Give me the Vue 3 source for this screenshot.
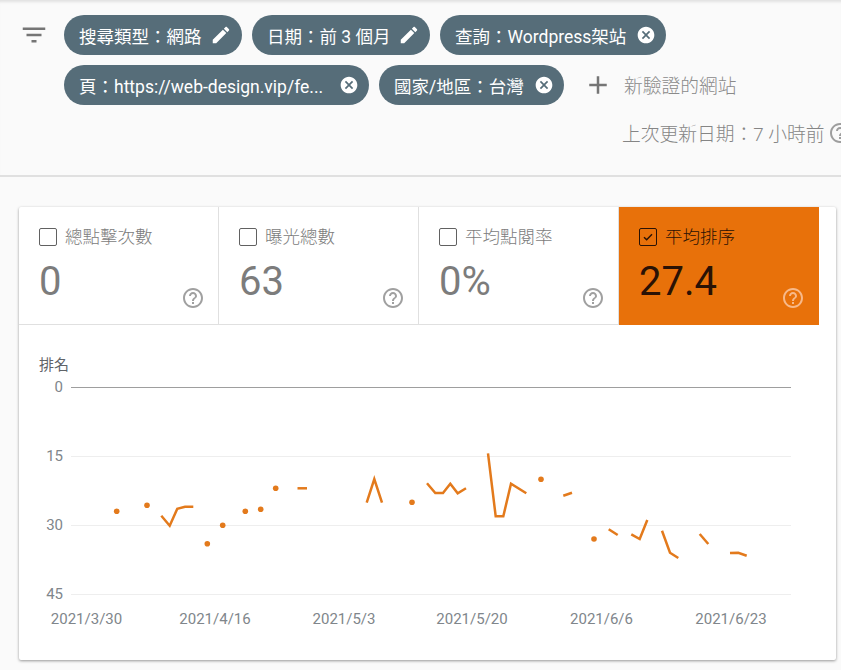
<script setup>
const help = 'M11 18h2v-2h-2v2zm1-16C6.48 2 2 6.48 2 12s4.48 10 10 10 10-4.48 10-10S17.52 2 12 2zm0 18c-4.41 0-8-3.59-8-8s3.59-8 8-8 8 3.59 8 8-3.59 8-8 8zm0-14c-2.21 0-4 1.79-4 4h2c0-1.1.9-2 2-2s2 .9 2 2c0 2-3 1.75-3 5h2c0-2.25 3-2.5 3-5 0-2.21-1.79-4-4-4z'
const edit = 'M3 17.25V21h3.75L17.81 9.94l-3.75-3.75L3 17.25zM20.71 7.04c.39-.39.39-1.02 0-1.41l-2.34-2.34c-.39-.39-1.02-.39-1.41 0l-1.83 1.83 3.75 3.75 1.83-1.83z'
const cancel = 'M12 2C6.47 2 2 6.47 2 12s4.47 10 10 10 10-4.47 10-10S17.53 2 12 2zm5 13.59L15.59 17 12 13.41 8.41 17 7 15.59 10.59 12 7 8.41 8.41 7 12 10.59 15.59 7 17 8.41 13.41 12 17 15.59z'

const chips = [
  { text: '搜尋類型：網路', icon: 'edit', w: 178 },
  { text: '日期：前 3 個月', icon: 'edit', w: 178 },
  { text: '查詢：Wordpress架站', icon: 'x', w: 226 },
  { text: '頁：https://web-design.vip/fe...', icon: 'x', w: 305 },
  { text: '國家/地區：台灣', icon: 'x', w: 185 },
]

const tiles = [
  { label: '總點擊次數', value: '0' },
  { label: '曝光總數', value: '63' },
  { label: '平均點閱率', value: '0%' },
  { label: '平均排序', value: '27.4', active: true },
]

const yTicks = [
  { label: '0', y: 387, dark: true },
  { label: '15', y: 456 },
  { label: '30', y: 525 },
  { label: '45', y: 594 },
]
const xTicks = [
  { label: '2021/3/30', x: 86.5 },
  { label: '2021/4/16', x: 215 },
  { label: '2021/5/3', x: 344 },
  { label: '2021/5/20', x: 472 },
  { label: '2021/6/6', x: 601.5 },
  { label: '2021/6/23', x: 731 },
]
const dots = [
  [116.7, 511.3], [147, 505.3], [207.3, 543.7], [222.7, 525.3], [245.3, 511.3],
  [260.7, 509.3], [275.7, 488.3], [412, 502.3], [541, 479.3], [594, 539],
]
const lines = [
  '161.3,515.7 169.7,525.7 177.3,508.7 185,506.7 193.3,506.7',
  '297.5,488.3 307,488.3',
  '366.7,502.7 374.3,479 382,502.7',
  '427,483.3 435.3,493 443,493 450.3,483.7 457.7,493.3 466,488.3',
  '488,453.3 495.7,516.3 503.3,516.3 511,483.7 526.3,493.3',
  '563.3,495.7 572,492.7',
  '608.7,529.3 617.7,535',
  '631.3,534.3 639.7,539 647.3,520',
  '662,530.7 670,552.7 678.3,558',
  '699.7,534 708.3,544',
  '730,553 738.3,552.7 746.7,555.7',
]
</script>

<template>
  <div class="page">
    <header class="header">
      <div class="filter-row">
        <svg class="filter-icon" viewBox="0 0 24 24"><path d="M10 18h4v-2h-4v2zM3 6v2h18V6H3zm3 7h12v-2H6v2z" /></svg>
        <div class="chips">
          <div v-for="c in chips" :key="c.text" class="chip" :style="{ width: c.w + 'px' }">
            <span class="chip-text">{{ c.text }}</span>
            <svg v-if="c.icon === 'edit'" class="chip-edit" viewBox="0 0 24 24"><path :d="edit" /></svg>
            <svg v-else class="chip-x" viewBox="0 0 24 24"><path :d="cancel" /></svg>
          </div>
          <div class="add">
            <svg class="plus" viewBox="0 0 24 24"><path d="M19 13h-6v6h-2v-6H5v-2h6V5h2v6h6v2z" /></svg>
            <span>新驗證的網站</span>
          </div>
        </div>
      </div>
      <div class="updated">
        <span>上次更新日期：7 小時前</span>
        <svg class="updated-help" viewBox="0 0 24 24"><path :d="help" /></svg>
      </div>
    </header>

    <main class="card">
      <div class="tiles">
        <div v-for="t in tiles" :key="t.label" class="tile" :class="{ active: t.active }">
          <div class="tile-label">
            <span class="box">
              <svg v-if="t.active" viewBox="0 0 18 18"><path d="M4.5 9.2l3 3 6-6.2" /></svg>
            </span>
            <span class="label-text">{{ t.label }}</span>
          </div>
          <div class="tile-value">{{ t.value }}</div>
          <svg class="tile-help" viewBox="0 0 24 24"><path :d="help" /></svg>
        </div>
      </div>
      <svg class="chart" viewBox="19 325 817 335">
        <text x="39" y="370" class="axis-title">排名</text>
        <g v-for="t in yTicks" :key="t.label">
          <line x1="71" x2="791" :y1="t.y + 0.5" :y2="t.y + 0.5" :class="t.dark ? 'grid-dark' : 'grid'" />
          <text x="63" :y="t.y + 5" text-anchor="end" class="tick">{{ t.label }}</text>
        </g>
        <text v-for="t in xTicks" :key="t.label" :x="t.x" y="624" text-anchor="middle" class="tick">{{ t.label }}</text>
        <polyline v-for="l in lines" :key="l" :points="l" class="series" />
        <circle v-for="d in dots" :key="d[0]" :cx="d[0]" :cy="d[1]" r="2.8" class="dot" />
      </svg>
    </main>
  </div>
</template>

<style scoped>
.page {
  width: 841px;
  height: 670px;
  overflow: hidden;
  background: #fafafa;
  font-family: Roboto, "Noto Sans CJK KR", "Noto Sans CJK TC", sans-serif;
  color: #757575;
}
.header {
  height: 177px;
  box-sizing: border-box;
  padding-top: 15px;
  border-bottom: 2px solid #e0e0e0;
  box-shadow: inset 0 4px 3px -2px rgba(0, 0, 0, 0.1);
}
.filter-row {
  display: flex;
  align-items: flex-start;
  padding-left: 19px;
}
.filter-icon {
  width: 30px;
  height: 30px;
  margin-top: 5px;
  fill: #757575;
  flex: none;
}
.chips {
  display: flex;
  flex-wrap: wrap;
  gap: 10px;
  margin-left: 15px;
  width: 740px;
}
.chip {
  height: 40px;
  box-sizing: border-box;
  border-radius: 20px;
  background: #566d79;
  color: #fff;
  font-size: 17.5px;
  display: flex;
  align-items: center;
  justify-content: space-between;
  padding: 0 10px 0 15px;
  white-space: nowrap;
}
.chip-edit {
  width: 22px;
  height: 22px;
  fill: #fff;
  flex: none;
}
.chip-x {
  width: 20px;
  height: 20px;
  fill: #fff;
  flex: none;
}
.add {
  display: flex;
  align-items: center;
  height: 40px;
  font-size: 18.75px;
  font-weight: 300;
  color: #8a8a8a;
  margin-left: 9px;
}
.add span {
  padding-bottom: 2px;
}
.plus {
  width: 30px;
  height: 30px;
  fill: #757575;
  margin-right: 11px;
}
.updated {
  display: flex;
  align-items: center;
  margin-top: 14px;
  padding-left: 622px;
  font-size: 18.75px;
  font-weight: 300;
  color: #858585;
  white-space: nowrap;
}
.updated-help {
  width: 24px;
  height: 24px;
  fill: #9e9e9e;
  margin-left: 4px;
  flex: none;
}
.card {
  width: 817px;
  height: 453px;
  margin: 30px 0 0 19px;
  background: #fff;
  border-radius: 2px;
  box-shadow: 0 1px 3px rgba(0, 0, 0, 0.4);
  overflow: hidden;
}
.tiles {
  display: flex;
  height: 118px;
  width: 800px;
}
.tile {
  position: relative;
  width: 200px;
  box-sizing: border-box;
  padding: 18px 0 0 20px;
  border-right: 1px solid #e0e0e0;
  border-bottom: 1px solid #e0e0e0;
  color: #7c7c7c;
}
.tile.active {
  background: #e8710a;
  border-color: #e8710a;
  color: #2a1205;
}
.tile-label {
  display: flex;
  align-items: center;
  gap: 8px;
  font-size: 17.5px;
  font-weight: 300;
  height: 24px;
}
.label-text {
  padding-bottom: 3px;
}
.box {
  width: 18px;
  height: 18px;
  box-sizing: border-box;
  border: 1px solid #616161;
  border-radius: 2px;
  display: block;
}
.active .box {
  border-color: #2a1205;
}
.box svg {
  display: block;
  width: 16px;
  height: 16px;
  fill: none;
  stroke: #2a1205;
  stroke-width: 1.6;
}
.tile-value {
  font-size: 40px;
  line-height: 47px;
  margin-top: 9px;
}
.tile-help {
  position: absolute;
  right: 13px;
  bottom: 14px;
  width: 24px;
  height: 24px;
  fill: #a0a0a0;
}
.active .tile-help {
  fill: #f7b98a;
}
.chart {
  display: block;
  width: 817px;
  height: 335px;
}
.axis-title {
  font-size: 15px;
  fill: #5f6368;
}
.tick {
  font-size: 15px;
  fill: #80868b;
}
.grid {
  stroke: #eeeeee;
  stroke-width: 1;
}
.grid-dark {
  stroke: #9e9e9e;
  stroke-width: 1;
}
.series {
  fill: none;
  stroke: #e37a1c;
  stroke-width: 2.5;
}
.dot {
  fill: #e37a1c;
}
</style>
